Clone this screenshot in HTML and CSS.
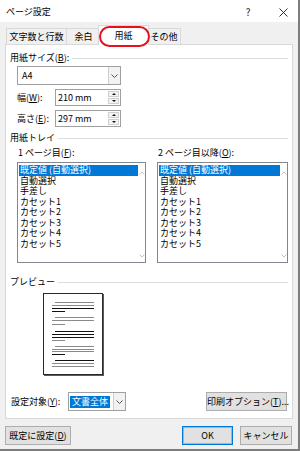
FILE: index.html
```html
<!DOCTYPE html>
<html lang="ja">
<head>
<meta charset="utf-8">
<title>ページ設定</title>
<link rel="stylesheet" href="styles.css">
</head>
<body>
<div class="window">
  <div class="titlebar">
    <span class="title">ページ設定</span>
    <span class="help">?</span>
    <span class="close"><svg width="9" height="9" viewBox="0 0 9 9"><path d="M0.5 0.5L8.5 8.5M8.5 0.5L0.5 8.5" stroke="#1a1a1a" stroke-width="0.9" fill="none"/></svg></span>
  </div>

  <div class="tabs">
    <div class="tab tab-1">文字数と行数</div>
    <div class="tab tab-2">余白</div>
    <div class="tab tab-active">用紙<span class="mark"></span></div>
    <div class="tab tab-4">その他</div>
  </div>

  <div class="panel">
    <div class="group-head"><span>用紙サイズ(<u>B</u>):</span></div>
    <div class="combo size-combo">
      <span class="combo-text">A4</span>
      <span class="drop"><svg width="7" height="4" viewBox="0 0 7 4"><path d="M0.5 0.5L3.5 3.5L6.5 0.5" stroke="#555" stroke-width="1" fill="none"/></svg></span>
    </div>
    <div class="field-row">
      <span class="field-label">幅(<u>W</u>):</span>
      <div class="spin">
        <span class="spin-text">210 mm</span>
        <span class="spin-btns"><span class="up"></span><span class="down"></span></span>
      </div>
    </div>
    <div class="field-row">
      <span class="field-label">高さ(<u>E</u>):</span>
      <div class="spin">
        <span class="spin-text">297 mm</span>
        <span class="spin-btns"><span class="up"></span><span class="down"></span></span>
      </div>
    </div>

    <div class="group-head gh-tray"><span>用紙トレイ</span></div>
    <div class="lists">
      <div class="list-col col-1">
        <div class="list-label">1 ページ目(<u>F</u>):</div>
        <div class="listbox">
          <div class="items">
            <div class="item selected">既定値 (自動選択)</div>
            <div class="item">自動選択</div>
            <div class="item">手差し</div>
            <div class="item">カセット1</div>
            <div class="item">カセット2</div>
            <div class="item">カセット3</div>
            <div class="item">カセット4</div>
            <div class="item">カセット5</div>
          </div>
          <div class="scrollbar">
            <svg width="6" height="4" viewBox="0 0 6 4"><path d="M0.5 3.5L3 1L5.5 3.5" stroke="#c4c4c4" stroke-width="1" fill="none"/></svg>
            <svg width="6" height="4" viewBox="0 0 6 4"><path d="M0.5 0.5L3 3L5.5 0.5" stroke="#c4c4c4" stroke-width="1" fill="none"/></svg>
          </div>
        </div>
      </div>
      <div class="list-col col-2">
        <div class="list-label">2 ページ目以降(<u>O</u>):</div>
        <div class="listbox">
          <div class="items">
            <div class="item selected">既定値 (自動選択)</div>
            <div class="item">自動選択</div>
            <div class="item">手差し</div>
            <div class="item">カセット1</div>
            <div class="item">カセット2</div>
            <div class="item">カセット3</div>
            <div class="item">カセット4</div>
            <div class="item">カセット5</div>
          </div>
          <div class="scrollbar">
            <svg width="6" height="4" viewBox="0 0 6 4"><path d="M0.5 3.5L3 1L5.5 3.5" stroke="#c4c4c4" stroke-width="1" fill="none"/></svg>
            <svg width="6" height="4" viewBox="0 0 6 4"><path d="M0.5 0.5L3 3L5.5 0.5" stroke="#c4c4c4" stroke-width="1" fill="none"/></svg>
          </div>
        </div>
      </div>
    </div>

    <div class="group-head gh-preview"><span>プレビュー</span></div>
    <div class="preview">
      <svg width="58" height="80" viewBox="0 0 58 80">
        <g fill="#8a8a8a">
          <rect x="11" y="8" width="39" height="1"/>
          <rect x="8" y="11" width="42" height="1"/>
          <rect x="11" y="23" width="39" height="1"/>
          <rect x="8" y="26" width="42" height="1"/>
          <rect x="8" y="30" width="13" height="1"/>
          <rect x="8" y="46" width="13" height="1"/>
          <rect x="11" y="52" width="39" height="1"/>
          <rect x="8" y="55" width="42" height="1"/>
          <rect x="8" y="57" width="42" height="1"/>
          <rect x="8" y="69" width="42" height="1"/>
          <rect x="8" y="72" width="42" height="1"/>
        </g>
        <g fill="#111">
          <rect x="8" y="14" width="42" height="1"/>
          <rect x="8" y="17" width="13" height="1"/>
          <rect x="11" y="37" width="39" height="1"/>
          <rect x="8" y="40" width="42" height="1"/>
          <rect x="8" y="43" width="42" height="1"/>
          <rect x="8" y="60" width="13" height="1"/>
          <rect x="11" y="66" width="39" height="1"/>
        </g>
      </svg>
    </div>

    <div class="setting-row">
      <span class="setting-label">設定対象(<u>Y</u>):</span>
      <div class="combo target-combo">
        <span class="combo-text"><span class="sel">文書全体</span></span>
        <span class="drop"><svg width="7" height="4" viewBox="0 0 7 4"><path d="M0.5 0.5L3.5 3.5L6.5 0.5" stroke="#555" stroke-width="1" fill="none"/></svg></span>
      </div>
      <button class="btn print-btn">印刷オプション(<u>T</u>)...</button>
    </div>
  </div>

  <div class="bottom-row">
    <button class="btn default-btn">既定に設定(<u>D</u>)</button>
    <button class="btn ok-btn">OK</button>
    <button class="btn cancel-btn">キャンセル</button>
  </div>
</div>
</body>
</html>
```

FILE: styles.css
```css
* { box-sizing: border-box; }
html, body { margin: 0; padding: 0; }
body {
  width: 300px;
  height: 451px;
  overflow: hidden;
  background: #f0f0f0;
  font-family: "Noto Sans CJK JP", "Noto Sans", sans-serif;
  font-size: 9px;
  color: #000;
}
u { text-underline-offset: 1px; text-decoration-thickness: 1px; }

.window {
  width: 300px;
  height: 451px;
  background: #f0f0f0;
  border-right: 2px solid #7d7d7d;
  border-bottom: 2px solid #7d7d7d;
  display: flex;
  flex-direction: column;
}

.titlebar {
  height: 22px;
  flex: none;
  background: #fff;
  display: flex;
  align-items: center;
  padding: 2px 8px 0 6px;
}
.title { flex: 1; line-height: 12px; font-size: 9px; }
.help { width: 14px; text-align: center; font-size: 10px; line-height: 12px; color: #222; }
.close { width: 14px; margin-left: 21px; display: flex; justify-content: center; }

.tabs {
  height: 22px;
  flex: none;
  display: flex;
  align-items: flex-end;
  padding-left: 6px;
}
.tab {
  height: 16px;
  border: 1px solid #d9d9d9;
  border-bottom: none;
  background: #f0f0f0;
  text-align: center;
  line-height: 15px;
  white-space: nowrap;
}
.tab-1 { width: 61px; }
.tab-2 { width: 35px; margin-left: -1px; }
.tab-active {
  width: 51px;
  height: 20px;
  margin-left: -3px;
  margin-bottom: -1px;
  background: #fff;
  position: relative;
  z-index: 2;
  line-height: 19px;
}
.tab-4 { width: 34px; margin-left: -2px; }
.mark {
  position: absolute;
  left: 0;
  top: 0;
  width: 51px;
  height: 21px;
  border: 2px solid #e8101c;
  border-radius: 11px;
}

.panel {
  margin-left: 5px;
  width: 288px;
  height: 375px;
  flex: none;
  background: #fff;
  border: 1px solid #d9d9d9;
  padding: 0 4px;
  display: flex;
  flex-direction: column;
}

.group-head {
  display: flex;
  align-items: center;
  line-height: 12px;
  height: 12px;
  margin-top: 7px;
  white-space: nowrap;
}
.group-head::after {
  content: "";
  flex: 1;
  border-top: 1px solid #dcdcdc;
  margin-left: 3px;
}
.gh-tray { margin-top: 5px; }
.gh-preview { margin-top: 13px; }

.combo {
  display: flex;
  background: #fff;
  border: 1px solid #a0a0a0;
  height: 19px;
}
.combo-text { flex: 1; display: flex; align-items: center; padding-left: 4px; }
.drop {
  width: 12px;
  border-left: 1px solid #cfcfcf;
  background: #f2f2f2;
  display: flex;
  align-items: center;
  justify-content: center;
}
.size-combo { margin: 2px 0 0 7px; width: 104px; }

.field-row {
  display: flex;
  align-items: center;
  margin-top: 4px;
  padding-left: 7px;
}
.field-label { width: 38px; line-height: 12px; }
.spin {
  width: 66px;
  height: 17px;
  border: 1px solid #a0a0a0;
  display: flex;
}
.spin-text { flex: 1; padding-left: 2px; line-height: 15px; }
.spin-btns {
  width: 12px;
  display: flex;
  flex-direction: column;
  padding: 1px 1px 1px 0;
  gap: 1px;
}
.spin-btns span {
  flex: 1;
  border: 1px solid #d0d0d0;
  background: #f4f4f4;
  display: flex;
  align-items: center;
  justify-content: center;
}
.spin-btns .up::before {
  content: "";
  border-left: 2px solid transparent;
  border-right: 2px solid transparent;
  border-bottom: 2px solid #111;
}
.spin-btns .down::before {
  content: "";
  border-left: 2px solid transparent;
  border-right: 2px solid transparent;
  border-top: 2px solid #111;
}

.lists {
  display: flex;
  gap: 11px;
  margin-top: 3px;
  padding-left: 7px;
}
.list-col { display: flex; flex-direction: column; }
.col-1 { width: 129px; }
.col-2 { width: 131px; }
.list-label { line-height: 12px; height: 12px; padding-left: 1px; white-space: nowrap; }
.listbox {
  margin-top: 3px;
  height: 101px;
  border: 1px solid #828790;
  display: flex;
  background: #fff;
}
.items { flex: 1; padding: 2px 0 0 1px; }
.item { line-height: 10.5px; height: 10.5px; padding-left: 1px; white-space: nowrap; }
.item.selected { background: #0078d7; color: #fff; }
.scrollbar {
  width: 7px;
  display: flex;
  flex-direction: column;
  justify-content: space-between;
  align-items: center;
  padding: 8px 0 4px;
}

.preview {
  margin: 5px 0 0 33px;
  width: 60px;
  height: 82px;
  border: 1px solid #2a2a2a;
  box-shadow: 1px 1px 0 #5a5a5a;
  background: #fff;
  display: flex;
}

.setting-row {
  display: flex;
  align-items: center;
  margin-top: 17px;
  height: 19px;
  padding-left: 1px;
}
.setting-label { width: 57px; white-space: nowrap; }
.target-combo { width: 58px; }
.target-combo .combo-text { padding-left: 1px; }
.sel { background: #0078d7; color: #fff; padding: 0 2px; line-height: 12px; }

.btn {
  font-family: inherit;
  font-size: 9px;
  color: #000;
  background: #e1e1e1;
  border: 1px solid #adadad;
  height: 19px;
  padding: 0;
  line-height: 16px;
  white-space: nowrap;
}
.print-btn { margin-left: auto; margin-right: 1px; width: 81px; }

.bottom-row {
  display: flex;
  margin-top: 7px;
  padding: 0 6px 0 5px;
}
.default-btn { width: 66px; }
.ok-btn { margin-left: auto; width: 51px; border-color: #0078d7; box-shadow: inset 0 0 0 1px rgba(0,120,215,0.35); }
.cancel-btn { margin-left: 7px; width: 52px; }
```
